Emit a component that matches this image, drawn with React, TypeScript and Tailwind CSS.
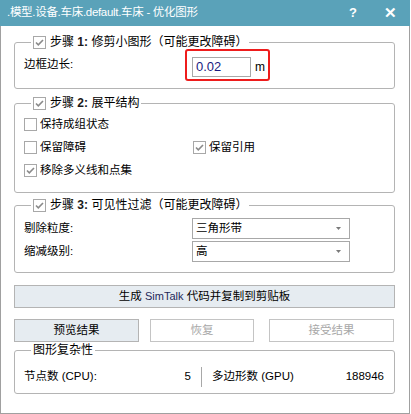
import React from "react";

const FONT = { fontFamily: '"Liberation Sans", "Noto Sans CJK SC", sans-serif' };

function Check({ checked }: { checked: boolean }) {
  return (
    <svg width="13" height="13" viewBox="0 0 13 13" className="shrink-0">
      <rect x="0.5" y="0.5" width="12" height="12" fill="#fff" stroke="#a8a8a8" />
      {checked && (
        <path d="M3 6.5 L5.3 8.8 L10 4" fill="none" stroke="#8a8a8a" strokeWidth="1.6" />
      )}
    </svg>
  );
}

function Legend({ n, title, checked = true }: { n?: string; title: string; checked?: boolean }) {
  return (
    <legend className="ml-[7px] flex h-[14px] items-center gap-[4px] px-[2px] text-[12px] leading-[14px]">
      {n ? <Check checked={checked} /> : null}
      <span>
        {n ? (
          <>
            步骤 <span className="font-bold text-[#1a1a1a]">{n}:</span>{" "}
          </>
        ) : null}
        {title}
      </span>
    </legend>
  );
}

function CheckRow({ label, checked }: { label: string; checked: boolean }) {
  return (
    <label className="flex h-[23px] items-center gap-[3px]">
      <Check checked={checked} />
      <span>{label}</span>
    </label>
  );
}

function Select({ value }: { value: string }) {
  return (
    <div className="flex h-[21px] w-[158px] items-center justify-between border border-[#a8a8a8] bg-white pl-[3px] pr-[8px]">
      <span>{value}</span>
      <svg width="5" height="3" viewBox="0 0 5 3">
        <path d="M0 0 H5 L2.5 3 Z" fill="#7a7a7a" />
      </svg>
    </div>
  );
}

export default function App() {
  return (
    <div className="flex h-[414px] w-[410px] flex-col bg-white text-[11.5px] text-black" style={FONT}>
      <div className="flex h-[26px] shrink-0 items-center bg-[#5aa2b9] pl-[7px] pr-[13px] text-white">
        <span className="flex-1 text-[11.5px] tracking-[-0.3px]">.模型.设备.车床.default.车床 - 优化图形</span>
        <span className="mr-[27px] text-[13px] font-bold">?</span>
        <span className="text-[15px] font-bold">✕</span>
      </div>

      <div className="flex flex-1 flex-col border-x border-b border-[#a0a0a0] pl-[13px] pr-[14px]">
        <fieldset className="mt-[9px] rounded-[3px] border border-[#b4b4b4] pb-[7px] pl-[9px]">
          <Legend n="1" title="修剪小图形（可能更改障碍）" />
          <div className="flex items-center">
            <span className="w-[161px]">边框边长:</span>
            <div className="flex h-[32px] items-start gap-[4px] rounded-[3px] border-2 border-[#ee1c1c] pl-[5px] pr-[3px] pt-[6px]">
              <div className="flex h-[20px] w-[59px] items-center border border-[#a8a8a8] pl-[3px] text-[13px] text-[#1a1a80]">
                0.02
              </div>
              <span className="text-[12px] leading-[20px]">m</span>
            </div>
          </div>
        </fieldset>

        <fieldset className="mt-[7px] rounded-[3px] border border-[#b4b4b4] pb-[10px] pl-[9px] pt-[3px]">
          <Legend n="2" title="展平结构" />
          <CheckRow label="保持成组状态" checked={false} />
          <div className="grid grid-cols-[169px_1fr]">
            <CheckRow label="保留障碍" checked={false} />
            <CheckRow label="保留引用" checked />
          </div>
          <CheckRow label="移除多义线和点集" checked />
        </fieldset>

        <fieldset className="mt-[5px] rounded-[3px] border border-[#b4b4b4] pb-[10px] pl-[9px] pt-[6px]">
          <Legend n="3" title="可见性过滤（可能更改障碍）" />
          <div className="flex flex-col gap-[2px]">
            <div className="flex items-center">
              <span className="w-[168px]">剔除粒度:</span>
              <Select value="三角形带" />
            </div>
            <div className="flex items-center">
              <span className="w-[168px]">缩减级别:</span>
              <Select value="高" />
            </div>
          </div>
        </fieldset>

        <button className="mt-[12px] h-[23px] border border-[#b4b4b4] bg-[#e6ecf1]">
          生成 <span className="text-[11px] text-[#1e2a5a]">SimTalk</span> 代码并复制到剪贴板
        </button>

        <div className="mt-[11px] flex h-[23px]">
          <button className="w-[125px] border border-[#b4b4b4] bg-[#e6ecf1]">预览结果</button>
          <button className="ml-[11px] w-[104px] border border-[#c4c4c4] bg-white text-[#a8a8a8]">恢复</button>
          <button className="ml-[15px] w-[125px] border border-[#c4c4c4] bg-white text-[#a8a8a8]">接受结果</button>
        </div>

        <fieldset className="mt-px rounded-[3px] border border-[#b4b4b4] pb-[6px] pl-[9px] pr-[10px] pt-[9px]">
          <Legend title="图形复杂性" />
          <div className="flex h-[21px] items-center">
            <span className="flex w-[167px] justify-between">
              <span>节点数 (CPU):</span>
              <span>5</span>
            </span>
            <span className="ml-[10px] h-[20px] w-px bg-[#a8a8a8]" />
            <span className="ml-[10px] flex-1">多边形数 (GPU)</span>
            <span>188946</span>
          </div>
        </fieldset>
      </div>
    </div>
  );
}
